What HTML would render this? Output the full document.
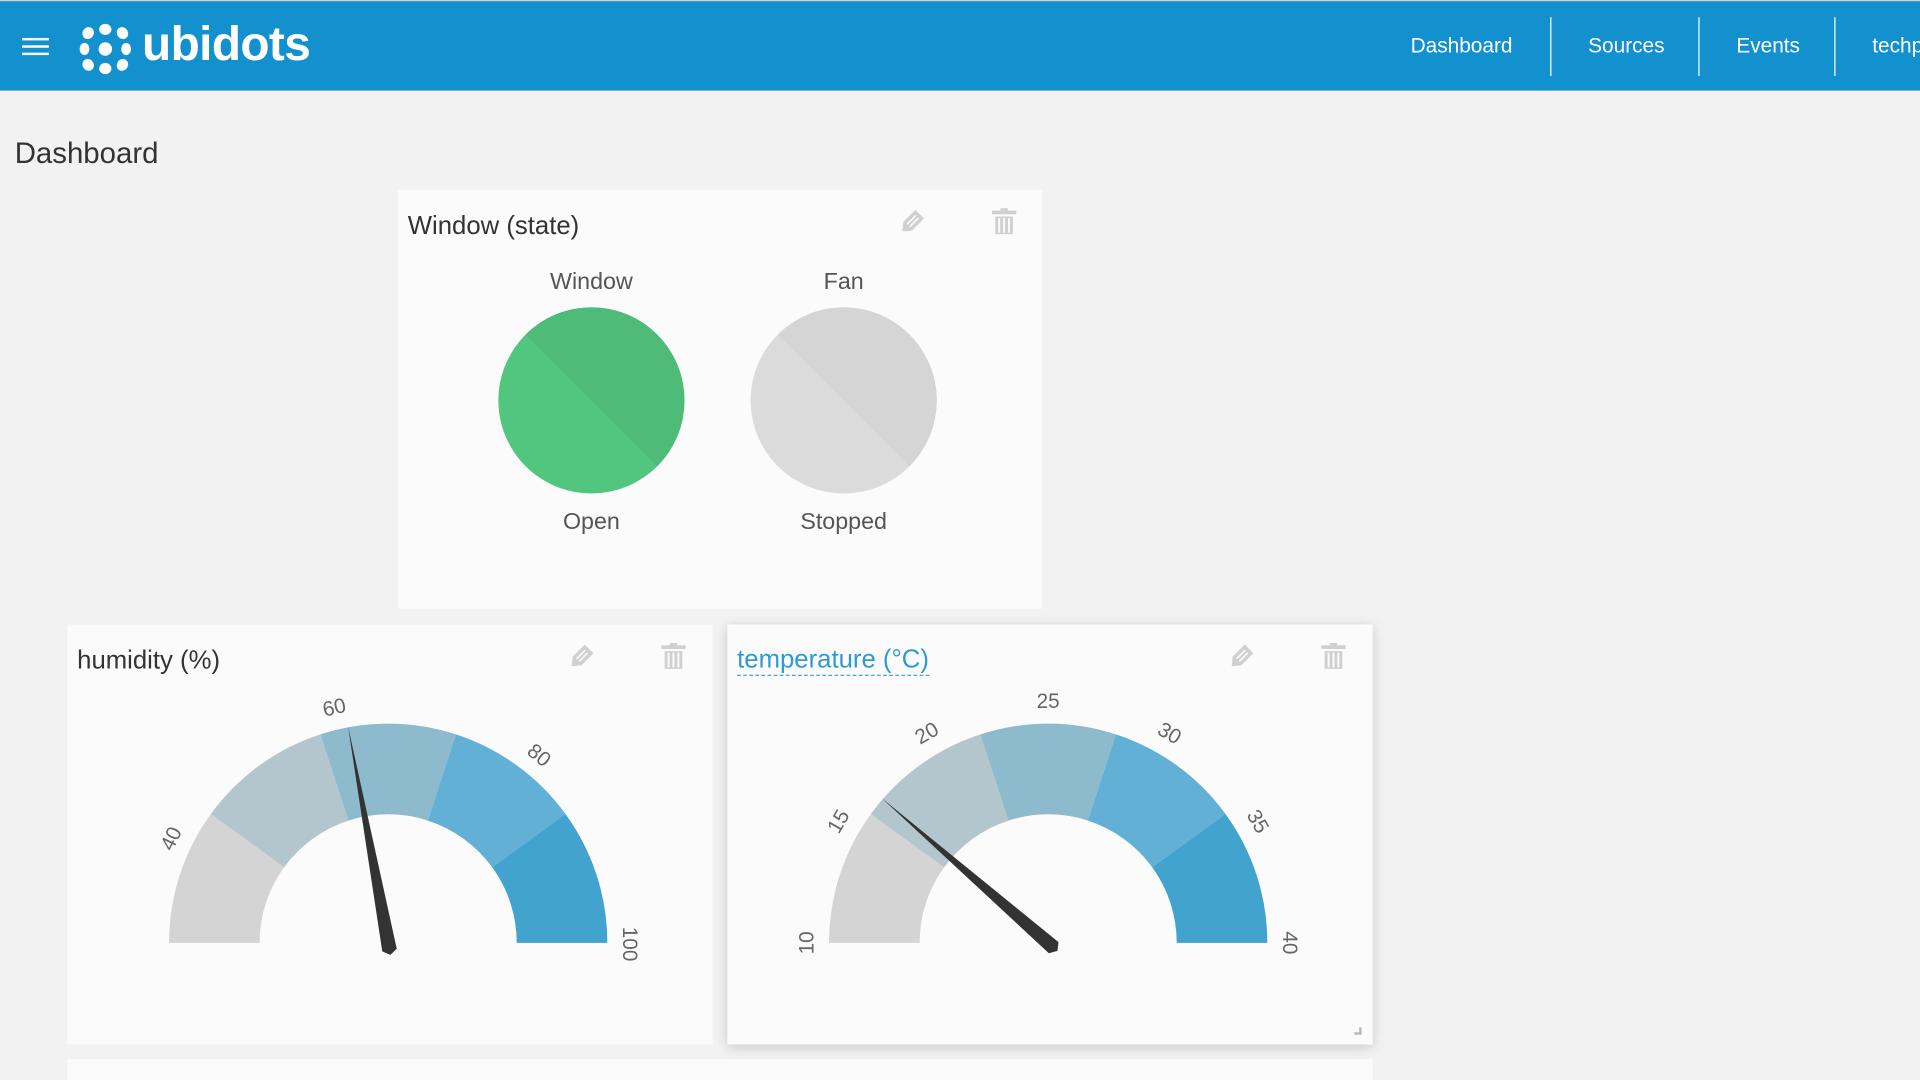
<!DOCTYPE html>
<html><head><meta charset="utf-8"><style>
html,body{margin:0;padding:0;width:1920px;height:1080px;overflow:hidden;background:#f2f2f2;font-family:"Liberation Sans",sans-serif}
#s{position:absolute;left:0;top:0;width:1568px;height:882px;transform:scale(1.22449);transform-origin:0 0;overflow:hidden}
.hdr{position:absolute;left:0;top:0;width:1568px;height:74px;background:#1390ce;border-top:1px solid #d0d0d0;box-sizing:border-box}
.nav{position:absolute;top:0;color:#fff;font-size:17px;line-height:74px}
.sep{position:absolute;top:13px;width:1px;height:48px;background:#fff}
.card{position:absolute;background:#fbfbfb}
.t{position:absolute;font-size:21px;color:#333}
.lbl{position:absolute;font-size:19px;color:#555;text-align:center;width:160px}
</style></head><body><div id="s">
<div class="hdr">
 <div style="position:absolute;left:18px;top:30px;width:22px;height:2px;background:#fff;box-shadow:0 6px 0 #fff,0 12px 0 #fff"></div>
 <svg style="position:absolute;left:62px;top:14px" width="50" height="50" viewBox="0 0 50 50" fill="#fff">
  <ellipse cx="10" cy="12" rx="4.5" ry="5" transform="rotate(35 10 12)"/><ellipse cx="24" cy="9" rx="5" ry="4.5"/><ellipse cx="38" cy="12" rx="4.5" ry="5" transform="rotate(-35 38 12)"/>
  <ellipse cx="7" cy="25" rx="4" ry="5"/><circle cx="24" cy="25" r="5.5"/><ellipse cx="41" cy="25" rx="4" ry="5"/>
  <ellipse cx="10" cy="38" rx="4.5" ry="5" transform="rotate(-35 10 38)"/><ellipse cx="24" cy="41" rx="5" ry="4.5"/><ellipse cx="38" cy="38" rx="4.5" ry="5" transform="rotate(35 38 38)"/>
 </svg>
 <div style="position:absolute;left:116px;top:14px;color:#fff;font-weight:bold;font-size:39px;letter-spacing:-0.5px">ubidots</div>
 <div class="nav" style="left:1152px">Dashboard</div><div class="sep" style="left:1266px"></div>
 <div class="nav" style="left:1297px">Sources</div><div class="sep" style="left:1387px"></div>
 <div class="nav" style="left:1418px">Events</div><div class="sep" style="left:1498px"></div>
 <div class="nav" style="left:1529px">techp</div>
</div>
<div style="position:absolute;left:12px;top:112px;font-size:24px;color:#333">Dashboard</div>

<div class="card" style="left:325px;top:155px;width:526px;height:342px">
 <div class="t" style="left:8px;top:18px">Window (state)</div>
 <div class="lbl" style="left:78px;top:65px">Window</div>
 <div class="lbl" style="left:284px;top:65px">Fan</div>
 <div class="lbl" style="left:78px;top:261px">Open</div>
 <div class="lbl" style="left:284px;top:261px">Stopped</div>
 <svg style="position:absolute;left:0;top:0" width="526" height="342">
  <clipPath id="c1"><circle cx="158" cy="172" r="76"/></clipPath>
  <circle cx="158" cy="172" r="76" fill="#52c57f"/><polygon points="78,92 238,92 238,252" fill="#4fbb78" clip-path="url(#c1)"/>
  <clipPath id="c2"><circle cx="364" cy="172" r="76"/></clipPath>
  <circle cx="364" cy="172" r="76" fill="#dbdbdb"/><polygon points="284,92 444,92 444,252" fill="#d5d5d5" clip-path="url(#c2)"/>
 </svg>
</div>

<svg width="0" height="0" style="position:absolute">
 <defs>
  <g id="pen"><g transform="translate(11,11) rotate(45)"><path d="M-5 -10 H5 V4 L0 10 L-5 4 Z" fill="#d0d0d0"/><path d="M-1.5 -7 V3 M1.5 -7 V3" stroke="#fbfbfb" stroke-width="1.3"/></g></g>
  <g id="bin" fill="#d0d0d0"><rect x="0" y="2" width="20" height="3"/><rect x="7" y="0" width="6" height="3"/><path d="M2 6 H18 V22 H2 Z M6 8 V20 M10 8 V20 M14 8 V20" stroke="#fbfbfb" stroke-width="1.6"/></g>
 </defs>
</svg>
<svg style="position:absolute;left:733px;top:171px" width="22" height="22"><use href="#pen"/></svg>
<svg style="position:absolute;left:810px;top:170px" width="20" height="24"><use href="#bin"/></svg>

<div class="card" style="left:55px;top:510px;width:527px;height:343px">
 <div class="t" style="left:8px;top:18px">humidity (%)</div>
</div>
<div class="card" style="left:594px;top:510px;width:527px;height:343px;box-shadow:0 2px 10px rgba(0,0,0,.18)">
 <div class="t" style="left:8px;top:17px;color:#2f9ad2;border-bottom:1px dashed #2f9ad2;line-height:24px">temperature (°C)</div>
 <div style="position:absolute;left:512px;top:329px;width:6px;height:6px;border-right:2px solid #bbb;border-bottom:2px solid #bbb;box-sizing:border-box"></div>
</div>
<div class="card" style="left:55px;top:865px;width:1066px;height:17px"></div>
<svg style="position:absolute;left:463px;top:526px" width="22" height="22"><use href="#pen"/></svg>
<svg style="position:absolute;left:540px;top:525px" width="20" height="24"><use href="#bin"/></svg>
<svg style="position:absolute;left:1002px;top:526px" width="22" height="22"><use href="#pen"/></svg>
<svg style="position:absolute;left:1079px;top:525px" width="20" height="24"><use href="#bin"/></svg>

<svg style="position:absolute;left:0;top:0" width="1568" height="882" font-family="Liberation Sans, sans-serif" font-size="17" fill="#666">
 <g fill="none" stroke-width="74" stroke-dasharray="89.22 2000">
  <circle cx="317" cy="770" r="142" stroke="#d4d4d4" transform="rotate(180 317 770)"/>
  <circle cx="317" cy="770" r="142" stroke="#b4c6cd" transform="rotate(216 317 770)"/>
  <circle cx="317" cy="770" r="142" stroke="#8dbacd" transform="rotate(252 317 770)"/>
  <circle cx="317" cy="770" r="142" stroke="#62b0d6" transform="rotate(288 317 770)"/>
  <circle cx="317" cy="770" r="142" stroke="#42a3cf" transform="rotate(324 317 770)"/>
  <circle cx="856" cy="770" r="142" stroke="#d4d4d4" transform="rotate(180 856 770)"/>
  <circle cx="856" cy="770" r="142" stroke="#b4c6cd" transform="rotate(216 856 770)"/>
  <circle cx="856" cy="770" r="142" stroke="#8dbacd" transform="rotate(252 856 770)"/>
  <circle cx="856" cy="770" r="142" stroke="#62b0d6" transform="rotate(288 856 770)"/>
  <circle cx="856" cy="770" r="142" stroke="#42a3cf" transform="rotate(324 856 770)"/>
 </g>
 <g text-anchor="middle" dominant-baseline="central">
  <text transform="translate(140,685) rotate(-64)">40</text>
  <text transform="translate(273,578) rotate(-13)">60</text>
  <text transform="translate(440,617) rotate(39)">80</text>
  <text transform="translate(514,771) rotate(90)">100</text>
  <text transform="translate(659,770) rotate(-90)">10</text>
  <text transform="translate(685,671) rotate(-60)">15</text>
  <text transform="translate(757,599) rotate(-30)">20</text>
  <text transform="translate(856,573)">25</text>
  <text transform="translate(955,599) rotate(30)">30</text>
  <text transform="translate(1027,671) rotate(60)">35</text>
  <text transform="translate(1053,770) rotate(90)">40</text>
 </g>
 <polygon points="-6,-6 180,0 -6,6 -10,0" fill="#333" transform="translate(317,770) rotate(-100.5)"/>
 <polygon points="-6,-6 180,0 -6,6 -10,0" fill="#333" transform="translate(856,770) rotate(-139)"/>
</svg>
</div></body></html>
